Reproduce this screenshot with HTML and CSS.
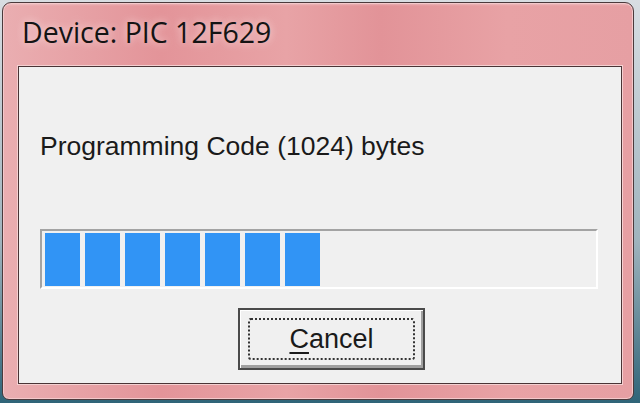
FILE: index.html
```html
<!DOCTYPE html>
<html>

<head>
    <title>Device: PIC 12F629</title>
    <link rel="stylesheet" href="styles.css">
</head>

<body>
    <div class="window">
        <div class="title-bar">Device: PIC 12F629</div>

        <div class="client">
            <div class="status-label">Programming Code (1024) bytes</div>

            <!-- 7 of 14 blocks filled -->
            <div class="progress">
                <div class="block"></div>
                <div class="block"></div>
                <div class="block"></div>
                <div class="block"></div>
                <div class="block"></div>
                <div class="block"></div>
                <div class="block"></div>
            </div>

            <button class="cancel-btn"><span class="focus-ring"><u>C</u>ancel</span></button>
        </div>
    </div>
</body>

</html>
```

FILE: styles.css
```css
body {
    margin: 0;
    width: 640px;
    height: 403px;
    overflow: hidden;
    background: linear-gradient(to bottom, #d8dde2 0%, #9fb3bd 60%, #2f6478 100%);
    font-family: 'Liberation Sans', Arial, sans-serif;
    padding: 2px 6px 3px 2px;
    box-sizing: border-box;
}

.window {
    height: 398px;
    border: 1px solid #4b3a3c;
    border-radius: 9px 9px 7px 7px;
    background:
        linear-gradient(to bottom, rgba(255, 255, 255, 0.35) 0, rgba(255, 255, 255, 0) 3px),
        linear-gradient(to right, #eaaeb1 0%, #e39499 25%, #e8a3a6 45%, #e29398 60%, #e8a2a5 80%, #e69fa3 100%);
    box-shadow: inset 0 0 0 1px #f3c9cb;
    box-sizing: border-box;
    padding: 0 11px 15px 15px;
    display: flex;
    flex-direction: column;
}

.title-bar {
    height: 63px;
    padding: 13px 0 0 4px;
    box-sizing: border-box;
    font-family: 'Open Sans', 'Noto Sans', sans-serif;
    font-size: 28.5px;
    line-height: 32px;
    color: #141414;
    text-shadow: 0 0 8px rgba(255, 235, 235, 0.9);
}

.client {
    flex: 1;
    background: #f0f0f0;
    border: 1px solid #4a3436;
    box-shadow: 0 0 0 1px #f4d0d1;
    display: flex;
    flex-direction: column;
    align-items: flex-start;
    padding: 0 23px 0 21px;
}

.status-label {
    margin-top: 64px;
    font-size: 26.5px;
    color: #1a1a1a;
}

.progress {
    margin-top: 67px;
    align-self: stretch;
    height: 60px;
    box-sizing: border-box;
    border: 2px solid;
    border-color: #a3a3a3 #ffffff #ffffff #a3a3a3;
    padding: 2px 3px 1px 3px;
    display: flex;
    gap: 5px;
}

.block {
    width: 35px;
    background: #3194f5;
}

.cancel-btn {
    margin: 19px 0 0 198px;
    width: 187px;
    height: 62px;
    padding: 8px;
    background: #f0f0f0;
    border: 2px solid #4a4a4a;
    box-shadow: inset 1px 1px 0 #ffffff, inset -2px -3px 0 #a0a0a0;
    font-family: 'Liberation Sans', Arial, sans-serif;
    font-size: 27px;
    color: #1a1a1a;
    cursor: pointer;
}

.focus-ring {
    display: flex;
    align-items: center;
    justify-content: center;
    height: 100%;
    border: 2px dotted #333;
    border-radius: 3px;
    box-sizing: border-box;
}

.focus-ring u {
    text-decoration-thickness: 2px;
    text-underline-offset: 4px;
}
```
